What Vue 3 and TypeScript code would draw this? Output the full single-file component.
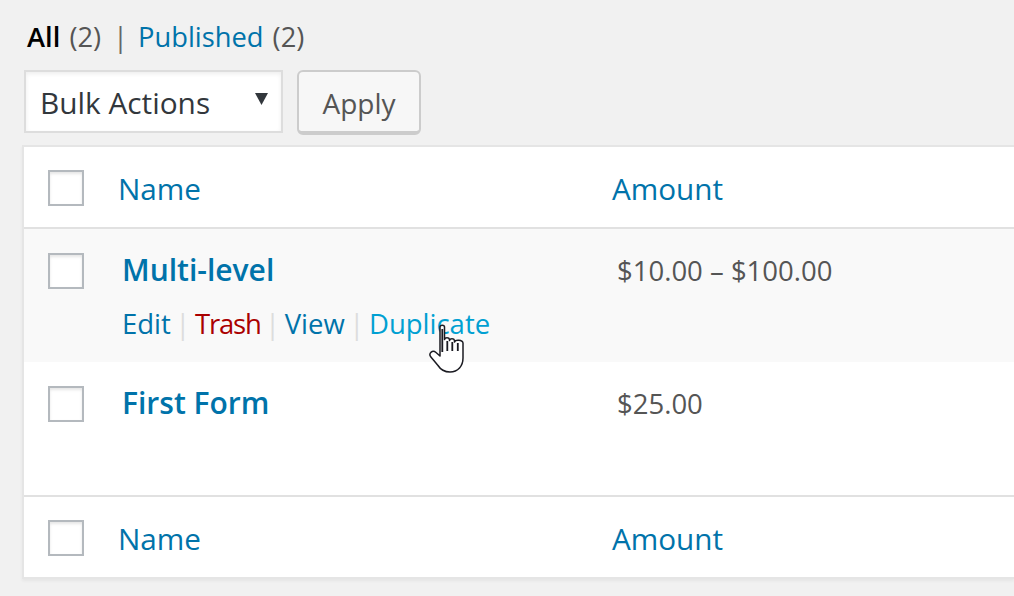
<script setup lang="ts">
interface FormRow {
	name: string;
	amount: string;
	hovered: boolean;
}

const rows: FormRow[] = [
	{ name: "Multi-level", amount: "$10.00 – $100.00", hovered: true },
	{ name: "First Form", amount: "$25.00", hovered: false },
];
</script>

<template>
	<div class="page">
		<ul class="views">
			<li><span class="current">All</span> <span class="count first">(2)</span></li>
			<li class="views-sep">|</li>
			<li><a class="link">Published</a> <span class="count last">(2)</span></li>
		</ul>

		<div class="actions">
			<div class="select">
				<span>Bulk Actions</span>
				<svg class="caret" viewBox="0 0 13 12" aria-hidden="true"><path d="M0 0h13L6.500 12z" /></svg>
			</div>
			<div class="apply">Apply</div>
		</div>

		<div class="table">
			<div class="row head">
				<span class="check" />
				<a class="link col-name">Name</a>
				<a class="link col-amount">Amount</a>
			</div>

			<div v-for="row in rows" :key="row.name" class="row item" :class="{ hovered: row.hovered }">
				<span class="check" />
				<div class="cell-name">
					<a class="title">{{ row.name }}</a>
					<div v-if="row.hovered" class="row-actions">
						<a class="link">Edit</a><i>|</i><a class="trash">Trash</a><i>|</i><a class="link">View</a><i>|</i>
						<span class="dup-wrap">
							<a class="dup">Duplicate</a>
							<svg class="hand" viewBox="0 0 36 50" aria-hidden="true">
								<path
									d="M11 3C11 0.500 15.500 0.500 15.500 3V15.500C16 13 20 13 20.500 15.500V16.500C21 14 25 14 25.500 16.500V18C26 15.500 33.500 15.500 34 19V34C34 42 29 48 21 48C15 48 11.500 45.500 9 41.500L1.500 32.500C-0.500 29 3.500 25.500 7 28.500L11 32Z"
									fill="#fff"
									stroke="#1b1b22"
									stroke-width="1.500"
									stroke-linejoin="round"
								/>
								<path d="M13.300 5V28M18.300 17V27M23.300 18V27M28.800 19V27" fill="none" stroke="#1b1b22" stroke-width="1.800" />
							</svg>
						</span>
					</div>
				</div>
				<div class="cell-amount">{{ row.amount }}</div>
			</div>

			<div class="row foot">
				<span class="check" />
				<a class="link col-name">Name</a>
				<a class="link col-amount">Amount</a>
			</div>
		</div>
	</div>
</template>

<style>
html,
body {
	margin: 0;
	background: #f1f1f1;
}
</style>

<style scoped>
.page {
	width: 1014px;
	height: 596px;
	overflow: hidden;
	box-sizing: border-box;
	padding: 18px 0 0 22px;
	background: #f1f1f1;
	color: #555;
	font-family: "Open Sans", "Noto Sans", sans-serif;
	font-size: 28px;
}
.views {
	display: flex;
	gap: 9px;
	height: 38px;
	margin: 0 0 14px 5px;
	padding: 0;
	list-style: none;
	font-size: 27.300px;
	line-height: 38px;
}
.current {
	color: #000;
	font-weight: 600;
}
.count {
	color: #555;
}
.count.first {
	margin-left: 2px;
}
.count.last {
	margin-left: 2px;
}
.views-sep {
	margin-left: 3px;
	padding-right: 1px;
	color: #666;
}
.link {
	color: #0073aa;
}
.actions {
	display: flex;
	align-items: flex-start;
	gap: 14px;
	height: 75px;
	padding-left: 2px;
}
.select {
	display: flex;
	align-items: center;
	justify-content: space-between;
	box-sizing: border-box;
	width: 259px;
	height: 63px;
	padding: 2px 13px 0 14px;
	background: #fff;
	border: 2px solid #ddd;
	box-shadow: inset 0 2px 4px rgba(0, 0, 0, 0.07);
	color: #32373c;
	font-size: 29.800px;
}
.caret {
	width: 13px;
	height: 12px;
	margin-bottom: 8px;
	fill: #32373c;
}
.apply {
	box-sizing: border-box;
	width: 124px;
	height: 65px;
	background: #f7f7f7;
	border: 2px solid #ccc;
	border-bottom-width: 4px;
	border-radius: 6px;
	color: #555;
	line-height: 63px;
	text-align: center;
}
.table {
	background: #fff;
	border: 2px solid #e5e5e5;
	border-right: 0;
	box-shadow: 0 2px 3px rgba(0, 0, 0, 0.05);
	width: 992px;
	box-sizing: border-box;
}
.row {
	position: relative;
	display: grid;
	grid-template-columns: 36px 528px 1fr;
	box-sizing: border-box;
	padding-left: 24px;
}
.head,
.foot {
	align-items: center;
	padding-top: 2px;
	font-size: 29.700px;
}
.head {
	border-bottom: 2px solid #e1e1e1;
	height: 82px;
}
.foot {
	border-top: 2px solid #e1e1e1;
	height: 82px;
}
.check {
	display: block;
	box-sizing: border-box;
	width: 36px;
	height: 36px;
	background: #fff;
	border: 2px solid #b4b9be;
	box-shadow: inset 0 2px 3px rgba(0, 0, 0, 0.1);
}
.col-name {
	padding-left: 34px;
}
.item {
	height: 133px;
	padding-top: 22px;
}
.item .check {
	margin-top: 2px;
}
.hovered {
	background: #f9f9f9;
}
.cell-name {
	padding-left: 38px;
}
.title {
	display: block;
	color: #0073aa;
	font-size: 30px;
	font-weight: 600;
	line-height: 38px;
}
.row-actions {
	display: flex;
	margin-top: 16px;
	font-size: 27.500px;
	line-height: 38px;
}
.row-actions i {
	margin: 0 4.500px;
	color: #ddd;
	font-style: normal;
}
.trash {
	color: #a00;
	letter-spacing: -1.200px;
}
.dup {
	color: #00a0d2;
}
.dup-wrap {
	position: relative;
}
.hand {
	position: absolute;
	top: 19px;
	left: 60px;
	width: 36px;
	height: 50px;
}
.cell-amount {
	padding: 1px 0 0 5px;
	font-size: 27.500px;
	line-height: 38px;
}
</style>
